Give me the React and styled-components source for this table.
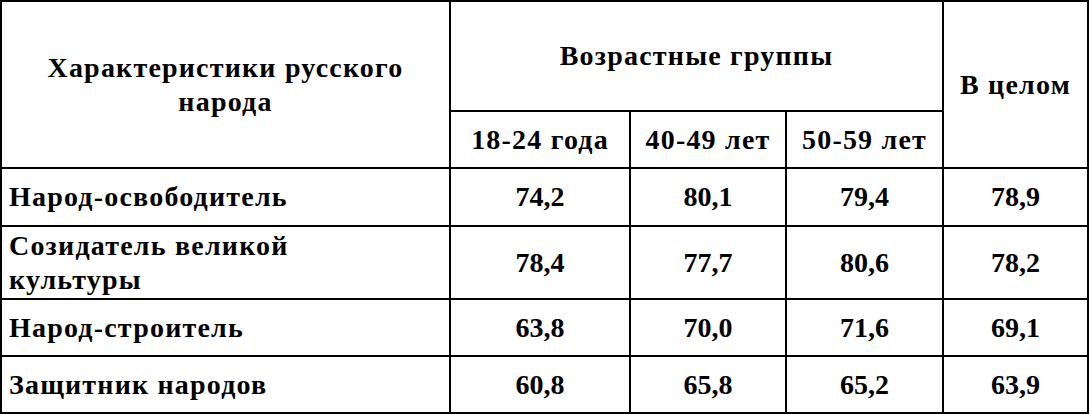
import styled, { createGlobalStyle } from "styled-components";

const GlobalStyle = createGlobalStyle`
  body {
    margin: 0;
  }
`;

const serif = "'Liberation Serif', 'Times New Roman', serif";

const Grid = styled.div`
  display: grid;
  grid-template-columns: 447px 178px 154px 155px 143px;
  grid-template-rows: 108px 55px 56px 71px 55px 55px;
  gap: 2px;
  padding: 2px;
  width: fit-content;
  background: #000;
`;

const Cell = styled.div`
  font-family: ${() => serif};
  font-weight: 700;
  font-size: ${props => props.$size || 28}px;
  line-height: 1.2;
  display: flex;
  align-items: center;
  justify-content: ${props => (props.$left ? "flex-start" : "center")};
  padding: 0 ${props => (props.$left ? 7 : 4)}px;
  background: #fff;
  text-align: ${props => (props.$left ? "left" : "center")};
  letter-spacing: ${props => (props.$num ? 0 : 1.2)}px;
  grid-row: span ${props => props.$rows || 1};
  grid-column: span ${props => props.$cols || 1};
`;

const rows = [
  { name: ["Народ-освободитель"], values: ["74,2", "80,1", "79,4", "78,9"] },
  { name: ["Созидатель великой", "культуры"], values: ["78,4", "77,7", "80,6", "78,2"] },
  { name: ["Народ-строитель"], values: ["63,8", "70,0", "71,6", "69,1"] },
  { name: ["Защитник народов"], values: ["60,8", "65,8", "65,2", "63,9"] },
];

export default function App() {
  return (
    <>
      <GlobalStyle />
      <Grid>
        <Cell $rows={2}>
          <div>
            Характеристики русского
            <br />
            народа
          </div>
        </Cell>
        <Cell $cols={3}>Возрастные группы</Cell>
        <Cell $rows={2}>В целом</Cell>
        <Cell>18-24 года</Cell>
        <Cell>40-49 лет</Cell>
        <Cell>50-59 лет</Cell>
        {rows.map((row, i) => [
          <Cell $left key={`n${i}`}>
            <div>
              {row.name.map((line, j) => (
                <div key={j}>{line}</div>
              ))}
            </div>
          </Cell>,
          ...row.values.map((v, j) => (
            <Cell $num key={`v${i}-${j}`}>
              {v}
            </Cell>
          )),
        ])}
      </Grid>
    </>
  );
}
